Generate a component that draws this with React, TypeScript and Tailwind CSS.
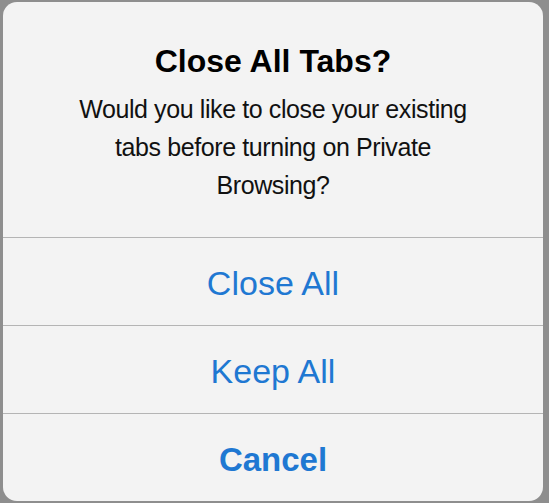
const font = { fontFamily: '"Liberation Sans", Arial, sans-serif' };

const actions = [
  { label: "Close All", bold: false },
  { label: "Keep All", bold: false },
  { label: "Cancel", bold: true },
];

export default function App() {
  return (
    <div
      className="h-[503px] w-[549px] bg-[#8e8e8e] pb-[2px] pl-[3px] pr-[6px] pt-[2px]"
      style={font}
    >
      <div className="flex h-full w-full flex-col overflow-hidden rounded-[14px] bg-[#f3f3f3]">
        <div className="flex h-[235px] flex-col items-center pt-[39px]">
          <h1 className="text-[32px] font-bold leading-[40px] text-black">
            Close All Tabs?
          </h1>
          <p className="mt-[9px] text-center text-[25px] leading-[38px] tracking-[-0.4px] text-[#111]">
            Would you like to close your existing
            <br />
            tabs before turning on Private
            <br />
            Browsing?
          </p>
        </div>
        {actions.map((a) => (
          <div key={a.label} className="flex flex-1 flex-col">
            <div className="h-px bg-[#b4b4b4]" />
            <button
              type="button"
              className={`flex flex-1 items-center justify-center pt-[4px] text-[#1f78d2] ${
                a.bold ? "text-[33px] font-bold" : "text-[34px] font-normal"
              }`}
            >
              {a.label}
            </button>
          </div>
        ))}
      </div>
    </div>
  );
}
